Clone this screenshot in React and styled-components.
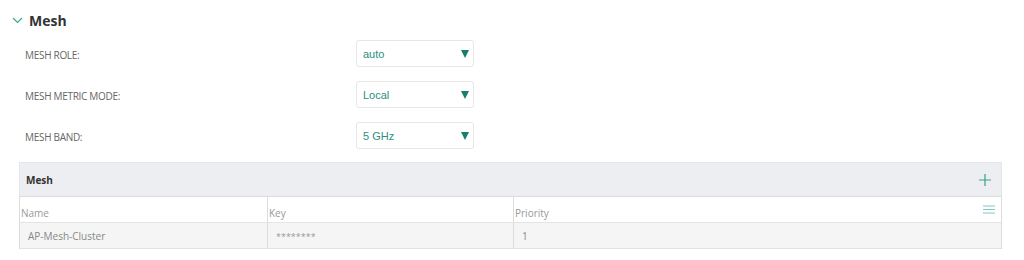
import React from 'react';
import styled, { createGlobalStyle } from 'styled-components';

const Global = createGlobalStyle`
    body {
        margin: 0;
        background: #fff;
        font-family: "Open Sans", "Liberation Sans", sans-serif;
    }
`;

const Page = styled.div`
    width: 1024px;
    height: 260px;
    padding: 11px 22px 0 12px;
    box-sizing: border-box;
`;

const SectionHead = styled.div`
    display: flex;
    align-items: center;
    gap: 6px;
    height: 18px;
    font-size: 14px;
    font-weight: 700;
    color: #333;
`;

const Fields = styled.div`
    display: flex;
    flex-direction: column;
    gap: 14px;
    padding: 11px 0 0 13px;
`;

const Field = styled.div`
    display: flex;
    align-items: center;
    height: 27px;
`;

const Label = styled.div`
    width: 331px;
    font-size: 10px;
    letter-spacing: -0.3px;
    color: #666;
    text-transform: uppercase;
    padding-top: 2px;
`;

const Select = styled.div`
    width: 118px;
    height: 27px;
    box-sizing: border-box;
    border: 1px solid #e6e6e6;
    border-radius: 3px;
    display: flex;
    align-items: center;
    justify-content: space-between;
    padding: 0 3px 0 6px;
    font-family: "Liberation Sans", Arial, sans-serif;
    font-size: 11px;
    color: #2a8f80;
`;

const Panel = styled.div`
    margin: 13px 0 0 7px;
    width: 983px;
`;

const PanelHead = styled.div`
    height: 34px;
    background: #eceef2;
    border: 1px solid #e4e6ea;
    border-bottom: none;
    box-sizing: border-box;
    display: flex;
    align-items: center;
    justify-content: space-between;
    padding: 0 10px 0 6px;
    font-size: 10px;
    font-weight: 700;
    color: #333;
`;

const Grid = styled.div`
    display: grid;
    grid-template-columns: 247px 246px 1fr;
    border: 1px solid #dcdcdc;
    border-bottom-color: #e2e2e2;
`;

const HeadCell = styled.div`
    height: 26px;
    box-sizing: border-box;
    border-left: ${p => (p.first ? 'none' : '1px solid #dcdcdc')};
    display: flex;
    align-items: flex-end;
    justify-content: space-between;
    padding: 0 6px 2px 1px;
    font-size: 10px;
    color: #999;
    background: #fff;
    border-bottom: 1px solid #e4e4e4;
`;

const Cell = styled.div`
    height: 25px;
    box-sizing: border-box;
    border-left: ${p => (p.first ? 'none' : '1px solid #dcdcdc')};
    display: flex;
    align-items: center;
    padding: 0 8px;
    font-size: 10px;
    color: #888;
    background: #f5f5f5;
`;

const Stars = styled.span`
    font-size: 9px;
    color: #999;
    padding-top: 2px;
`;

const MenuWrap = styled.span`
    align-self: center;
    padding-top: 3px;
`;

const Chevron = () => (
    <svg width="11" height="7" viewBox="0 0 11 7">
        <path d="M1 1l4.5 4.5L10 1" fill="none" stroke="#3aa796" strokeWidth="1.2" />
    </svg>
);

const Caret = () => (
    <svg width="10" height="10" viewBox="0 0 10 10">
        <path d="M1 1h8L5 9z" fill="#157f6f" />
    </svg>
);

const Plus = () => (
    <svg width="12" height="12" viewBox="0 0 12 12">
        <path d="M6 0v12M0 6h12" stroke="#3a9f8e" strokeWidth="1.2" />
    </svg>
);

const Menu = () => (
    <svg width="12" height="9" viewBox="0 0 12 9">
        <path d="M0 1h12M0 4.5h12M0 8h12" stroke="#7fcbbf" strokeWidth="1.2" />
    </svg>
);

const fields = [
    { label: 'Mesh Role:', value: 'auto' },
    { label: 'Mesh Metric Mode:', value: 'Local' },
    { label: 'Mesh Band:', value: '5 GHz' },
];

export default function App() {
    return (
        <Page>
            <Global />
            <SectionHead>
                <Chevron />
                Mesh
            </SectionHead>
            <Fields>
                {fields.map(f => (
                    <Field key={f.label}>
                        <Label>{f.label}</Label>
                        <Select>
                            {f.value}
                            <Caret />
                        </Select>
                    </Field>
                ))}
            </Fields>
            <Panel>
                <PanelHead>
                    Mesh
                    <Plus />
                </PanelHead>
                <Grid>
                    <HeadCell first>Name</HeadCell>
                    <HeadCell>Key</HeadCell>
                    <HeadCell>
                        Priority
                        <MenuWrap><Menu /></MenuWrap>
                    </HeadCell>
                    <Cell first>AP-Mesh-Cluster</Cell>
                    <Cell><Stars>********</Stars></Cell>
                    <Cell>1</Cell>
                </Grid>
            </Panel>
        </Page>
    );
}
